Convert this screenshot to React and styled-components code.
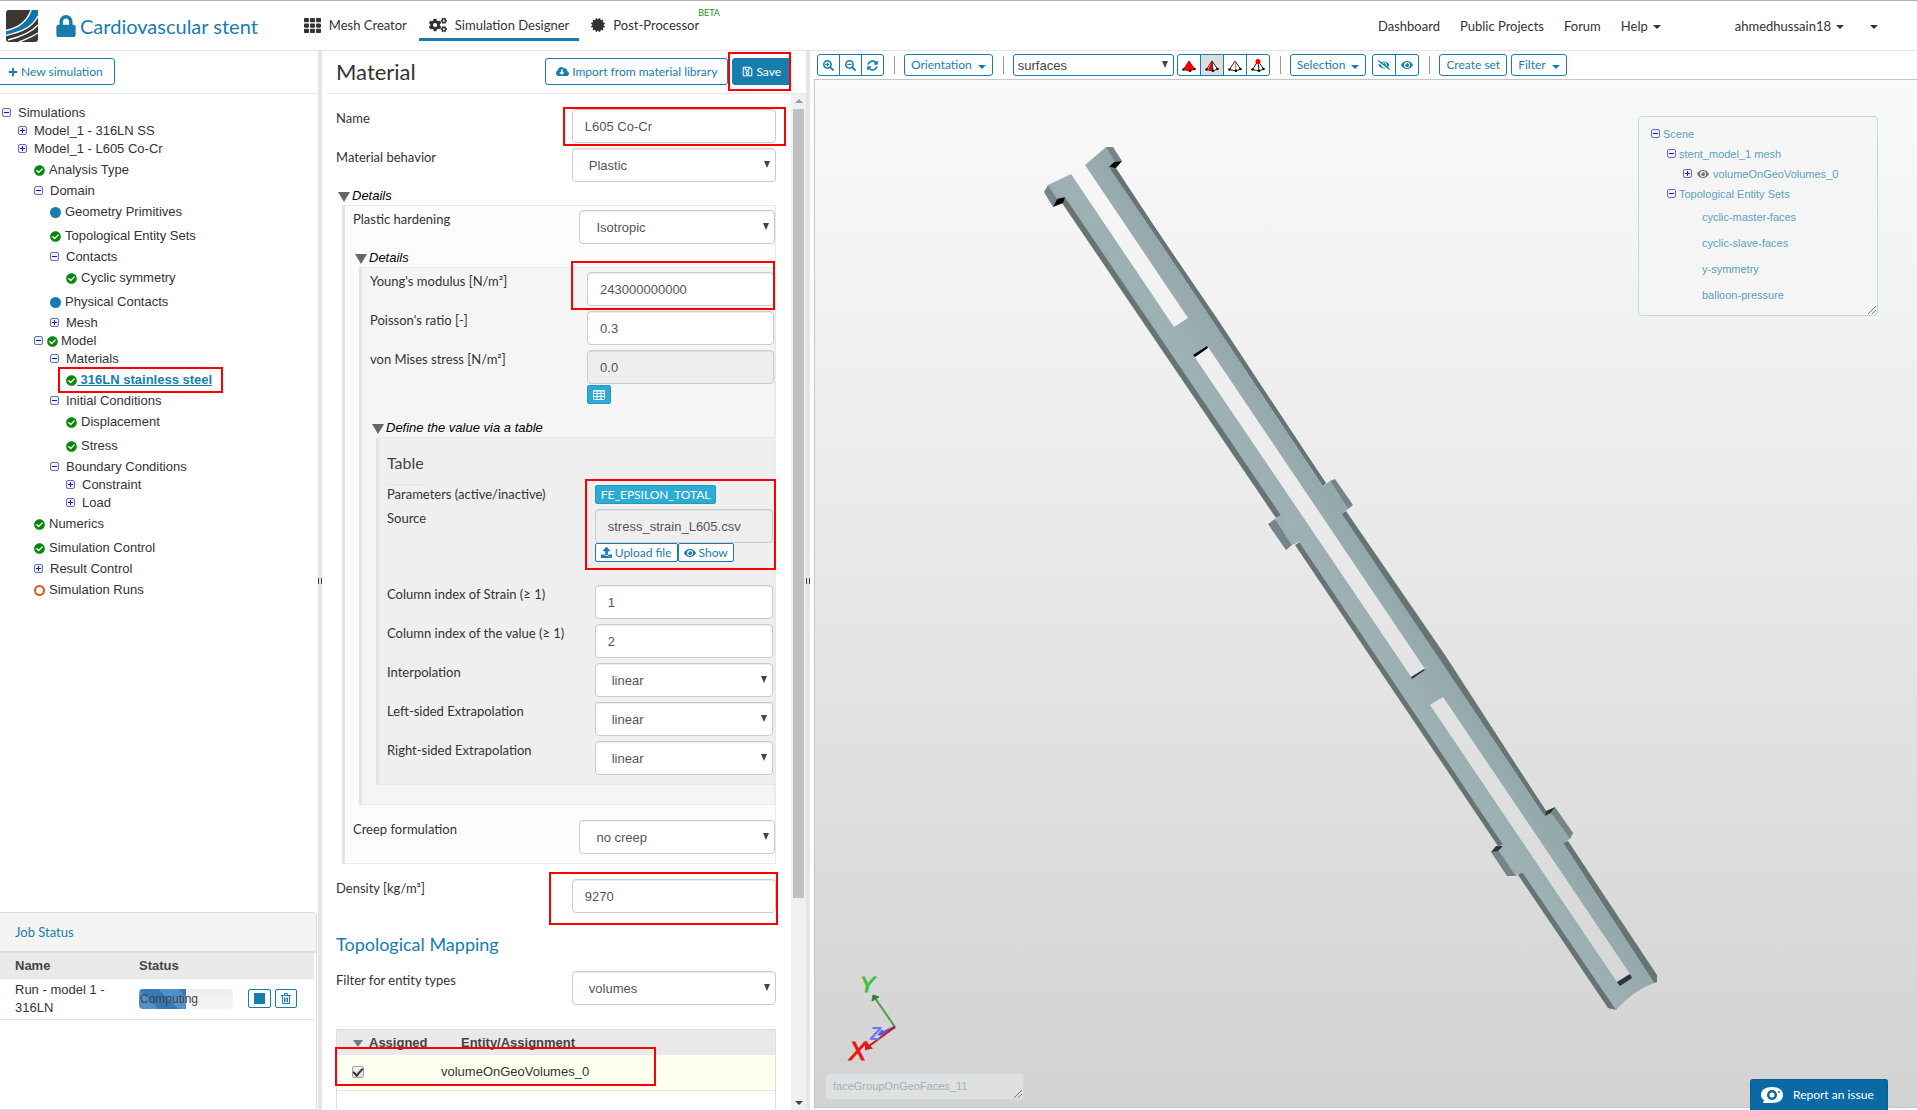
import { useState } from "react";
import styled, { createGlobalStyle, css } from "styled-components";
import {
    FaLock, FaTh, FaCogs, FaCertificate, FaPlus, FaCloudDownloadAlt, FaRegSave, FaUpload,
    FaEye, FaEyeSlash, FaSearchPlus, FaSearchMinus, FaSyncAlt, FaCheckCircle,
} from "react-icons/fa";

const blue = "#177dad";
const sans = `"Liberation Sans", Arial, sans-serif`;
const lato = `Lato, "Liberation Sans", sans-serif`;

const GlobalStyle = createGlobalStyle`
    * { box-sizing: border-box; }
    body {
        margin: 0;
        background: #fff;
        color: #333;
        font: 13px/18px ${sans};
    }
    button, input, select { font: inherit; margin: 0; }
    a { color: inherit; text-decoration: none; }
`;

const Page = styled.div`
    display: flex;
    flex-direction: column;
    height: 100vh;
    overflow: hidden;
`;

/* red frame laid over a part of the page */
const Mark = styled.span`
    position: absolute;
    z-index: 3;
    inset: ${(p) => p.$inset};
    border: 2px solid #f00;
    pointer-events: none;
`;

/* ---------- header ---------- */

const Header = styled.header`
    display: flex;
    align-items: center;
    height: 51px;
    flex: none;
    padding: 0 39px 0 6px;
    border-top: 1px solid #b0b0b0;
    border-bottom: 1px solid #e5e5e5;
    font: 13px/18px ${lato};
`;
const ProjectName = styled.h1`
    display: flex;
    align-items: center;
    gap: 3px;
    margin: 0 36px 0 17px;
    font: 20px/26px ${lato};
    color: ${blue};
`;
const Tabs = styled.nav`
    display: flex;
    flex: 1;
    gap: 2px;
`;
const Tab = styled.a`
    position: relative;
    display: flex;
    align-items: center;
    gap: 8px;
    height: 29px;
    padding: 0 10px;
    margin-top: 2px;
    border-bottom: 3px solid ${(p) => (p.$active ? blue : "transparent")};
`;
const Beta = styled.sup`
    position: absolute;
    left: 100%;
    top: -5px;
    margin-left: -11px;
    font-size: 9px;
    line-height: 12px;
    color: #1d8f1d;
`;
const Links = styled.nav`
    display: flex;
    gap: 20px;
    margin-right: 74px;
`;
const Account = styled.div`
    display: flex;
    gap: 26px;
`;
const MenuLink = styled.a`
    display: flex;
    align-items: center;
    gap: 5px;
`;
const Caret = styled.span`
    border: 4px solid transparent;
    border-top-color: currentColor;
    border-bottom: 0;
    margin-top: 3px;
`;

/* ---------- panes ---------- */

const Main = styled.main`
    display: flex;
    flex: 1;
    min-height: 0;
`;
const Side = styled.aside`
    display: flex;
    flex-direction: column;
    width: 318px;
    flex: none;
`;
const Center = styled.section`
    display: flex;
    flex-direction: column;
    width: 484px;
    flex: none;
    padding-left: 4px;
`;
const Splitter = styled.div`
    display: flex;
    align-items: center;
    justify-content: center;
    width: 4px;
    flex: none;
    background: #e5e5e5;

    &::after {
        content: "";
        width: 3px;
        height: 6px;
        border: solid #444;
        border-width: 0 1px;
    }
`;
const PaneHead = styled.div`
    display: flex;
    align-items: center;
    gap: 4px;
    height: 43px;
    flex: none;
    border-bottom: 1px solid #e8e8e8;
    padding: ${(p) => p.$pad || 0};
`;
const PaneTitle = styled.h2`
    flex: 1;
    margin: 0;
    font: 22px/26px ${lato};
`;
const Button = styled.button`
    display: inline-flex;
    align-items: center;
    justify-content: center;
    gap: 3px;
    height: 27px;
    padding: 0 10px;
    border: 1px solid ${blue};
    border-radius: 3px;
    background: #fff;
    color: ${blue};
    font: 12px/18px ${lato};
    white-space: nowrap;
    ${(p) => p.$primary && css`
        background: ${blue};
        color: #fff;
        padding: 0 9px;
    `}
    ${(p) => p.$small && css`
        height: 19px;
        padding: 0 5px;
        border-radius: 2px;
    `}
    ${(p) => p.$edge && css`
        margin-left: -1px;
        border-radius: 0 3px 3px 0;
        padding: 0 11px 0 8px;
    `}
`;
const Anchor = styled.span`
    position: relative;
    display: flex;
`;

/* ---------- simulation tree ---------- */

const Tree = styled.ul`
    flex: 1;
    margin: 0;
    padding: 10px 0 0;
    list-style: none;
`;
const Node = styled.li`
    display: flex;
    align-items: center;
    gap: ${(p) => (p.$tight ? 3 : 4)}px;
    height: ${(p) => (p.$leaf ? 24 : 18)}px;
    padding-left: ${(p) => 2 + p.$level * 16}px;
`;
const NodeLink = styled.a`
    margin-left: ${(p) => (p.$folder ? 2 : 0)}px;
    ${(p) => p.$active && css`
        margin-left: -4px;
        white-space: pre;
        font-weight: bold;
        text-decoration: underline;
        color: ${blue};
    `}
`;
const Dot = styled.span`
    width: 11px;
    height: 11px;
    border-radius: 50%;
    background: ${(p) => (p.$open ? "#fff" : blue)};
    border: ${(p) => (p.$open ? "2px solid #e0561f" : 0)};
`;

/* ---------- jobs ---------- */

const Jobs = styled.section`
    height: 198px;
    flex: none;
    margin-right: 1px;
    border: 1px solid #ddd;
    border-left: 0;
    border-radius: 0 4px 0 0;
`;
const JobsTitle = styled.h3`
    margin: 0;
    padding: 10px 15px;
    border-bottom: 2px solid #ddd;
    background: #f4f4f4;
    font: 13px/18px ${lato};
    color: ${blue};
`;
const JobTable = styled.table`
    width: calc(100% - 2px);
    border-collapse: collapse;
    table-layout: fixed;

    th {
        height: 26px;
        padding: 0 0 0 15px;
        background: #e9e9e9;
        text-align: left;
        color: #444;
    }
    td {
        height: 40px;
        padding: 1px 0 1px 15px;
        border-bottom: 1px solid #ddd;
    }
    td + td, th + th { padding-left: 0; }
`;
const Progress = styled.div`
    width: 94px;
    height: 20px;
    border-radius: 4px;
    background: linear-gradient(#eee, #f5f5f5);
    overflow: hidden;
`;
const ProgressBar = styled.div`
    height: 20px;
    padding-left: 1px;
    background: repeating-linear-gradient(45deg, #5290c8 0 14px, #337ab7 14px 28px);
    font-size: 12px;
    line-height: 20px;
    color: #444;
    white-space: nowrap;
`;
const JobActions = styled.div`
    display: flex;
    gap: 4px;
`;
const StopSquare = styled.span`
    width: 11px;
    height: 11px;
    background: ${blue};
`;

/* ---------- material form ---------- */

const Scroller = styled.div`
    display: flex;
    flex: 1;
    min-height: 0;
`;
const Form = styled.form`
    flex: 1;
    padding: 15px 15px 0 10px;
    overflow: hidden;
`;
const ScrollTrack = styled.div`
    display: flex;
    flex-direction: column;
    align-items: center;
    width: 15px;
    padding: 5px 0;
    background: #f0f0f0;
`;
const ScrollArrow = styled.span`
    border: 4px solid transparent;
    border-width: ${(p) => (p.$down ? "4px 4px 0" : "0 4px 4px")};
    border-top-color: ${(p) => (p.$down ? "#444" : "transparent")};
    border-bottom-color: ${(p) => (p.$down ? "transparent" : "#999")};
`;
const ScrollSpace = styled.div`
    flex: 1;
    width: 11px;
    padding: 6px 0;
`;
const ScrollThumb = styled.div`
    height: 80%;
    background: #c1c1c1;
`;
const Row = styled.div`
    position: relative;
    display: grid;
    grid-template-columns: 1fr calc(48% - 7px);
    margin: ${(p) => p.$top || 0}px 0 5px;
`;
const Label = styled.label`
    font: 13px/18px ${lato};
`;
const fieldBox = css`
    display: block;
    width: 100%;
    height: 34px;
    border: 1px solid #ccc;
    border-radius: 4px;
    background: #fff;
    box-shadow: inset 0 1px 1px rgba(0, 0, 0, 0.075);
    color: #555;
`;
const Input = styled.input`
    ${fieldBox}
    padding: 0 12px;

    &:disabled { background: #eee; }
`;
const SelectWrap = styled.span`
    position: relative;
    display: block;

    &::after {
        content: "";
        position: absolute;
        right: 6px;
        top: 50%;
        margin-top: -4px;
        border: 3px solid transparent;
        border-top: 7px solid #444;
        border-bottom: 0;
        pointer-events: none;
    }
`;
const Select = styled.select`
    ${fieldBox}
    appearance: none;
    padding: 2px 16px 0;
`;
const Disclosure = styled.button`
    display: flex;
    align-items: center;
    gap: 2px;
    height: 18px;
    margin: ${(p) => p.$top || 0}px 0 0;
    padding: 0 0 0 2px;
    border: 0;
    background: none;
    font-style: italic;
    color: #000;

    &::before {
        content: "";
        border: 6px solid transparent;
        border-top: 10px solid #666;
        border-bottom: 0;
        margin-top: 2px;
    }
`;
const Group = styled.div`
    margin-left: 6px;
    padding: 4px 0 ${(p) => p.$bottom}px 8px;
    border: 1px solid #eaeaea;
    border-left: 3px solid #e3e3e3;
    background: ${(p) => p.$bg};
`;
const TableTitle = styled.h4`
    display: table;
    margin: 0;
    padding: 11px 0 11px;
    border-bottom: 1px solid #e5e5e5;
    font: 16px/20px ${lato};
    color: #444;
`;
const InfoButton = styled.button`
    display: flex;
    align-items: center;
    justify-content: center;
    min-width: 22px;
    height: 19px;
    margin-top: ${(p) => p.$top || 0}px;
    padding: 0 5px;
    border: 1px solid #269abc;
    border-radius: 2px;
    background: #2dabd2;
    color: #fff;
    font: 12px/16px ${lato};
`;
const ButtonPair = styled.div`
    display: flex;
`;
const SectionTitle = styled.h3`
    margin: 20px 0 16px;
    font: 18px/22px ${lato};
    color: ${blue};
`;
const MappingBox = styled.div`
    position: relative;
    height: 120px;
    margin-top: 24px;
    border: 1px solid #ddd;
`;
const MappingTable = styled.table`
    width: 100%;
    border-collapse: collapse;

    th {
        height: 25px;
        padding: 0 0 0 16px;
        background: #e9e9e9;
        text-align: left;
        color: #444;
    }
    th + th { padding-left: 20px; }
    td {
        height: 35px;
        padding: 0 0 0 15px;
        background: #fffff0;
        border-bottom: 1px solid #e8e8e0;
    }
    td + td { padding-left: 0; }
`;
const Checkbox = styled.input`
    appearance: none;
    display: grid;
    place-items: center;
    width: 12px;
    height: 12px;
    border: 1px solid #a5a5a5;
    border-radius: 2px;
    background: linear-gradient(#f2f2f2, #dcdcdc);

    &:checked::after {
        content: "";
        width: 4px;
        height: 8px;
        margin-top: -3px;
        border: solid #333;
        border-width: 0 2px 2px 0;
        transform: rotate(42deg);
    }
`;
const Sorted = styled.span`
    display: inline-block;
    margin-right: 6px;
    border: 5px solid transparent;
    border-top: 7px solid #6d7885;
    border-bottom: 0;
`;

/* ---------- viewer ---------- */

const Viewer = styled.section`
    display: flex;
    flex-direction: column;
    flex: 1;
    min-width: 0;
    padding: 0 0 2px 4px;
`;
const Toolbar = styled.div`
    display: flex;
    align-items: center;
    height: 28px;
    flex: none;
    padding: 0 3px;
`;
const ToolGroup = styled.div`
    display: flex;
    margin-right: ${(p) => p.$gap || 0}px;
`;
const Tool = styled.button`
    display: flex;
    align-items: center;
    justify-content: center;
    gap: 6px;
    height: 22px;
    min-width: ${(p) => (p.$narrow ? 23 : 24)}px;
    margin-right: -1px;
    padding: 0 ${(p) => (p.$text ? 6 : 0)}px;
    border: 1px solid ${blue};
    background: ${(p) => (p.$pressed ? "#ddd" : "#fff")};
    color: ${blue};
    font: 12px/18px ${lato};
    white-space: nowrap;

    &:first-child { border-radius: 3px 0 0 3px; }
    &:last-child { border-radius: 0 3px 3px 0; margin-right: 0; }
    &:only-child { border-radius: 3px; }
`;
const Divider = styled.span`
    width: 1px;
    height: 18px;
    margin: 0 9px 0 10px;
    background: #999;
`;
const PickSelect = styled.select`
    appearance: none;
    display: block;
    width: 161px;
    height: 22px;
    padding: 2px 4px 0;
    border: 1px solid ${blue};
    border-radius: 3px;
    background: #fff;
    color: #444;
`;
const Canvas = styled.div`
    position: relative;
    flex: 1;
    min-height: 0;
    border: 1px solid #c6c6c6;
    border-right: 0;
    background: linear-gradient(#fafafa, #ebebeb 40%, #d2d2d2);
    overflow: hidden;
`;
const Drawing = styled.svg`
    display: block;
    width: 100%;
    height: 100%;
`;
const ScenePanel = styled.div`
    position: absolute;
    top: 36px;
    right: 39px;
    width: 240px;
    height: 200px;
    padding: 7px 12px;
    border: 1px solid #b5dfe8;
    border-radius: 4px;
    background: rgba(245, 245, 245, 0.8);
    font-size: 11px;
    color: #5d9fc0;
`;
const SceneNode = styled.div`
    display: flex;
    align-items: center;
    gap: ${(p) => p.$gap || 2}px;
    height: ${(p) => (p.$tall ? 26 : 20)}px;
    padding-left: ${(p) => p.$indent}px;
`;
const HoverBox = styled.div`
    position: absolute;
    left: 10px;
    bottom: 7px;
    width: 199px;
    height: 27px;
    padding: 0 7px;
    border: 1px solid #c8dce2;
    border-radius: 4px;
    background: #e0e0e0;
    font-size: 11px;
    line-height: 25px;
    color: #9ab2c0;
`;
const Grip = styled.svg`
    position: absolute;
    right: 1px;
    bottom: 1px;
`;
const Report = styled.button`
    position: fixed;
    right: 29px;
    bottom: 0;
    display: flex;
    align-items: center;
    gap: 9px;
    width: 138px;
    height: 31px;
    padding: 0 9px;
    border: 1px solid #0a5c93;
    border-bottom: 0;
    border-radius: 3px 3px 0 0;
    background: #0b69a3;
    color: #fff;
    font: 12px/18px ${lato};
    white-space: nowrap;
`;

function Logo() {
    return (
        <svg width="32" height="32" viewBox="0 0 32 32">
            <rect width="32" height="32" rx="3" fill="#3b3735" />
            <path d="M25 0H32V8C26 18 14 21 0 25V20C12 17 21 12 25 0Z" fill="#0d76b0" />
            <path d="M25 0C21 12 12 18 0 20.500M32 6C26 18 15 22 0 25.500M32 15C25 23 14 27 2 30M32 23C26 27 20 29 13 32" fill="none" stroke="#fff" strokeWidth="1.400" />
        </svg>
    );
}

function Expander({ open }) {
    return (
        <svg width="10" height="10" viewBox="0 0 10 10">
            <rect x=".5" y=".5" width="8" height="8" rx="1.500" fill="#eef0fa" stroke="#6570ba" />
            <path d={open ? "M2 4.500H7" : "M2 4.500H7M4.500 2V7"} stroke="#1a1ab0" />
        </svg>
    );
}

function GridIcon() {
    return (
        <svg width="12" height="10" viewBox="0 0 12 10" fill="none" stroke="currentColor">
            <rect x=".5" y=".5" width="11" height="9" rx="1" />
            <path d="M0 1H12M0 3.500H12M0 6.500H12M4 1V10M8 1V10" />
        </svg>
    );
}

function TrashIcon() {
    return (
        <svg width="10" height="11" viewBox="0 0 10 11" fill="none" stroke="currentColor">
            <path d="M0 2.500H10M3.500 2V.5H6.500V2M1.500 2.500V10.500H8.500V2.500M3.500 4.500V9M5 4.500V9M6.500 4.500V9" />
        </svg>
    );
}

function ReportIcon() {
    return (
        <svg width="24" height="18" viewBox="0 0 24 18">
            <path d="M12 1C19 1 23 4 23 9S19 17 12 17H3L4 14C2 13 1 11 1 9C1 4 5 1 12 1Z" fill="#fff" />
            <circle cx="12" cy="9" r="5" fill="#0b69a3" />
            <circle cx="12" cy="9" r="2.500" fill="#fff" />
            <circle cx="19" cy="6" r="1" fill="#0b69a3" />
        </svg>
    );
}

function ResizeGrip() {
    return (
        <Grip width="8" height="8" viewBox="0 0 8 8">
            <path d="M0 8L8 0M4 8L8 4" stroke="#777" />
        </Grip>
    );
}

function Tetra({ kind }) {
    return (
        <svg width="14" height="13" viewBox="0 0 14 13" strokeLinejoin="round">
            <path d="M7 2L1.500 10.500L8 12L12.500 10Z" fill={kind === "volume" ? "#f00" : "#fff"} stroke={kind === "volume" ? "#c00" : "#222"} />
            {kind === "face" && <path d="M7 2L3 10.500L8 12Z" fill="#f00" />}
            <path d="M7 2L8 12" stroke={kind === "volume" ? "#c00" : kind === "edge" ? "#e55" : "#222"} />
            {kind === "node" && <circle cx="7" cy="2.500" r="2.500" fill="#f00" />}
            <circle cx="1.500" cy="10.500" r="1.300" fill="#111" />
            <circle cx="8" cy="11.700" r="1.300" fill="#111" />
            <circle cx="12.500" cy="10" r="1.300" fill="#111" />
        </svg>
    );
}

function Stent() {
    return (
        <g>
            <defs>
                <linearGradient id="metal" gradientUnits="userSpaceOnUse" x1="1300" y1="607" x2="1371" y2="560">
                    <stop offset="0" stopColor="#94a8ab" />
                    <stop offset=".45" stopColor="#9eb2b6" />
                    <stop offset="1" stopColor="#95a9ac" />
                </linearGradient>
            </defs>
            {/* long side walls */}
            <g fill="#667574">
                <path d="M1065 197L1280 515L1276 518L1062 203Z" />
                <path d="M1300 542L1503 845L1498 846L1295 545Z" />
                <path d="M1522 872L1617 1010L1608 1008L1518 875Z" />
                <path d="M1109 167L1116 168L1216 320L1326 483L1323 486Z" />
                <path d="M1341 514L1346 511L1445 655L1546 811L1545 817Z" />
                <path d="M1563 843L1568 841L1657 975V982L1654 983Z" />
            </g>
            <path fill="url(#metal)" fillRule="evenodd" d="M1085 165L1106 147L1116 161L1110 167L1323 486L1330 481L1348 509L1342 514L1545 816L1551 813L1570 839L1563 843L1654 983Q1634 990 1616 1010L1522 872L1516 876L1498 851L1503 845L1299 542L1292 545L1275 519L1279 515L1065 197L1057 200L1048 185L1071 174L1174 327L1188 318Z
                M1194 356L1208 347L1425 669L1412 678Z M1430 705L1443 697L1630 974L1617 982Z" />
            {/* wall thickness along both outer edges */}
            <g fill="none" stroke="#667574" strokeWidth="4">
                <path d="M1065 201L1279 516M1298 544L1501 845M1521 874L1612 1008" />
                <path d="M1112 168L1217 322L1324 484M1344 513L1443 658L1545 813M1566 842L1655 978" />
            </g>
            {/* tab sides */}
            <g fill="#758486">
                <path d="M1106 147H1113L1122 161L1115 162Z" />
                <path d="M1048 185L1044 192L1053 207L1057 199Z" />
                <path d="M1268 524L1275 519L1292 545L1286 550Z" />
                <path d="M1335 479L1330 481L1348 509L1353 505Z" />
                <path d="M1491 852L1498 850L1516 876H1507Z" />
                <path d="M1555 807L1573 833L1570 839L1551 813Z" />
            </g>
            <path fill="#000" d="M1109 167L1114 162L1122 161L1116 168ZM1053 207L1057 199L1065 197L1063 203ZM1193 355L1207 346L1208 348L1195 357Z" />
            <path fill="#2f3638" d="M1411 677L1424 669L1425 670L1412 679ZM1545 816L1546 811L1555 807L1551 813ZM1491 852L1496 846H1503L1498 851ZM1617 982L1630 974L1632 978L1620 986Z" />
        </g>
    );
}

function Axes() {
    return (
        <g fontFamily="Liberation Sans, sans-serif" fontStyle="italic" fontWeight="bold">
            <path d="M895 1027L875 998" stroke="#4a9e4a" strokeWidth="2" />
            <path d="M872 1001L873 995L879 997Z" fill="#3c7d3c" stroke="#3c7d3c" />
            <path d="M895 1027L880 1034" stroke="#5a5ad0" strokeWidth="3" />
            <path d="M878 1035L882 1030L885 1035Z" fill="#5a5ae0" stroke="#5a5ae0" />
            <path d="M895 1027L869 1046" stroke="#d01818" strokeWidth="2" />
            <path d="M866 1043L871 1048L866 1049Z" fill="#d81818" stroke="#d81818" strokeWidth="2" />
            <text x="860" y="992" fontSize="22" fontWeight="normal" stroke="#3fbf3f" fill="#3fbf3f">Y</text>
            <text x="870" y="1040" fontSize="18" fill="#7474ff">Z</text>
            <text x="849" y="1060" fontSize="26" fontWeight="normal" stroke="#e81818" fill="#e81818">X</text>
        </g>
    );
}

const nodes = [
    { text: "Simulations", level: 0, open: true },
    { text: "Model_1 - 316LN SS", level: 1, open: false },
    { text: "Model_1 - L605 Co-Cr", level: 1, open: false },
    { text: "Analysis Type", level: 2, mark: "ok" },
    { text: "Domain", level: 2, open: true },
    { text: "Geometry Primitives", level: 3, mark: "dot" },
    { text: "Topological Entity Sets", level: 3, mark: "ok" },
    { text: "Contacts", level: 3, open: true },
    { text: "Cyclic symmetry", level: 4, mark: "ok" },
    { text: "Physical Contacts", level: 3, mark: "dot" },
    { text: "Mesh", level: 3, open: false },
    { text: "Model", level: 2, open: true, mark: "ok" },
    { text: "Materials", level: 3, open: true },
    { text: " 316LN stainless steel", level: 4, mark: "ok", active: true },
    { text: "Initial Conditions", level: 3, open: true },
    { text: "Displacement", level: 4, mark: "ok" },
    { text: "Stress", level: 4, mark: "ok" },
    { text: "Boundary Conditions", level: 3, open: true },
    { text: "Constraint", level: 4, open: false },
    { text: "Load", level: 4, open: false },
    { text: "Numerics", level: 2, mark: "ok" },
    { text: "Simulation Control", level: 2, mark: "ok" },
    { text: "Result Control", level: 2, open: false },
    { text: "Simulation Runs", level: 2, mark: "open" },
];

function TreeNode({ node }) {
    const folder = node.open !== undefined;
    return (
        <Node $leaf={!folder} $tight={folder && node.mark} $level={node.level}>
            {folder && <Expander open={node.open} />}
            {node.mark === "ok" && <FaCheckCircle size={11} color="#0a870a" />}
            {node.mark === "dot" && <Dot />}
            {node.mark === "open" && <Dot $open />}
            <Anchor>
                <NodeLink href="#" $active={node.active} $folder={folder && !node.mark}>{node.text}</NodeLink>
                {node.active && <Mark $inset="-4px -11px -4px -23px" />}
            </Anchor>
        </Node>
    );
}

function TextField({ id, label, value, mark, top, disabled, children }) {
    return (
        <Row $top={top}>
            <Label htmlFor={id}>{label}</Label>
            <div>
                <Input id={id} defaultValue={value} disabled={disabled} />
                {children}
            </div>
            {mark && <Mark $inset={mark} />}
        </Row>
    );
}

function SelectField({ id, label, value, top }) {
    return (
        <Row $top={top}>
            <Label htmlFor={id}>{label}</Label>
            <SelectWrap>
                <Select id={id} defaultValue={value}>
                    <option>{value}</option>
                </Select>
            </SelectWrap>
        </Row>
    );
}

function MaterialForm() {
    const [assigned, setAssigned] = useState(true);
    return (
        <Form onSubmit={(event) => event.preventDefault()}>
            <TextField id="name" label="Name" value="L605 Co-Cr" mark="-2px -10px -3px 227px" />
            <SelectField id="behavior" label="Material behavior" value="Plastic" />
            <Disclosure type="button">Details</Disclosure>
            <Group $bg="#fcfcfc" $bottom={4}>
                <SelectField id="hardening" label="Plastic hardening" value="Isotropic" />
                <Disclosure type="button">Details</Disclosure>
                <Group $bg="#f5f5f5" $bottom={19}>
                    <TextField id="young" label="Young's modulus [N/m²]" value="243000000000" mark="-11px -1px -4px 201px" />
                    <TextField id="poisson" label="Poisson's ratio [-]" value="0.3" />
                    <TextField id="mises" label="von Mises stress [N/m²]" value="0.0" disabled>
                        <InfoButton type="button" $top={1} aria-label="Table"><GridIcon /></InfoButton>
                    </TextField>
                    <Disclosure type="button" $top={15}>Define the value via a table</Disclosure>
                    <Group $bg="#efefef" $bottom={4}>
                        <TableTitle>Table</TableTitle>
                        <Row>
                            <Label as="span">Parameters (active/inactive)</Label>
                            <div><InfoButton type="button">FE_EPSILON_TOTAL</InfoButton></div>
                            <Mark $inset="-6px -3px -66px 198px" />
                        </Row>
                        <TextField id="source" label="Source" value="stress_strain_L605.csv" disabled>
                            <ButtonPair>
                                <Button type="button" $small><FaUpload size={11} /> Upload file</Button>
                                <Button type="button" $small><FaEye size={12} /> Show</Button>
                            </ButtonPair>
                        </TextField>
                        <TextField id="strain" label="Column index of Strain (≥ 1)" value="1" top={23} />
                        <TextField id="column" label="Column index of the value (≥ 1)" value="2" />
                        <SelectField id="interpolation" label="Interpolation" value="linear" />
                        <SelectField id="left" label="Left-sided Extrapolation" value="linear" />
                        <SelectField id="right" label="Right-sided Extrapolation" value="linear" />
                    </Group>
                </Group>
                <SelectField id="creep" label="Creep formulation" value="no creep" top={15} />
            </Group>
            <TextField id="density" label="Density [kg/m³]" value="9270" top={15} mark="-7px -2px -12px 213px" />
            <SectionTitle>Topological Mapping</SectionTitle>
            <SelectField id="filter" label="Filter for entity types" value="volumes" />
            <MappingBox>
                <MappingTable>
                    <thead>
                        <tr>
                            <th style={{ width: 104 }}><Sorted />Assigned</th>
                            <th>Entity/Assignment</th>
                        </tr>
                    </thead>
                    <tbody>
                        <tr>
                            <td>
                                <Checkbox
                                    type="checkbox"
                                    aria-label="volumeOnGeoVolumes_0"
                                    checked={assigned}
                                    onChange={(event) => setAssigned(event.target.checked)}
                                />
                            </td>
                            <td>volumeOnGeoVolumes_0</td>
                        </tr>
                    </tbody>
                </MappingTable>
                <Mark $inset="17px 119px 62px -2px" />
            </MappingBox>
        </Form>
    );
}

function JobStatus() {
    return (
        <Jobs>
            <JobsTitle>Job Status</JobsTitle>
            <JobTable>
                <thead>
                    <tr>
                        <th style={{ width: 139 }}>Name</th>
                        <th style={{ width: 109 }}>Status</th>
                        <th aria-label="Actions"></th>
                    </tr>
                </thead>
                <tbody>
                    <tr>
                        <td>Run - model 1 -<br />316LN</td>
                        <td>
                            <Progress><ProgressBar style={{ width: "50%" }}>Computing</ProgressBar></Progress>
                        </td>
                        <td>
                            <JobActions>
                                <Button $small aria-label="Stop"><StopSquare /></Button>
                                <Button $small aria-label="Delete"><TrashIcon /></Button>
                            </JobActions>
                        </td>
                    </tr>
                </tbody>
            </JobTable>
        </Jobs>
    );
}

function ViewerToolbar() {
    return (
        <Toolbar>
            <ToolGroup>
                <Tool $narrow aria-label="Zoom in"><FaSearchPlus size={11} /></Tool>
                <Tool $narrow aria-label="Zoom out"><FaSearchMinus size={11} /></Tool>
                <Tool $narrow aria-label="Reset"><FaSyncAlt size={11} /></Tool>
            </ToolGroup>
            <Divider />
            <ToolGroup><Tool $text>Orientation <Caret /></Tool></ToolGroup>
            <Divider />
            <ToolGroup $gap={3}>
                <SelectWrap>
                    <PickSelect aria-label="Pick mode" defaultValue="surfaces"><option>surfaces</option></PickSelect>
                </SelectWrap>
            </ToolGroup>
            <ToolGroup>
                <Tool aria-label="Volumes"><Tetra kind="volume" /></Tool>
                <Tool aria-label="Faces" $pressed><Tetra kind="face" /></Tool>
                <Tool aria-label="Edges"><Tetra kind="edge" /></Tool>
                <Tool aria-label="Nodes"><Tetra kind="node" /></Tool>
            </ToolGroup>
            <Divider />
            <ToolGroup $gap={6}><Tool $text>Selection <Caret /></Tool></ToolGroup>
            <ToolGroup>
                <Tool aria-label="Hide"><FaEyeSlash size={12} /></Tool>
                <Tool aria-label="Show"><FaEye size={12} /></Tool>
            </ToolGroup>
            <Divider />
            <ToolGroup $gap={4}><Tool $text>Create set</Tool></ToolGroup>
            <ToolGroup><Tool $text>Filter <Caret /></Tool></ToolGroup>
        </Toolbar>
    );
}

export default function App() {
    return (
        <Page>
            <GlobalStyle />
            <Header>
                <Logo />
                <ProjectName><FaLock size={22} /> Cardiovascular stent</ProjectName>
                <Tabs>
                    <Tab href="#"><FaTh size={17} /> Mesh Creator</Tab>
                    <Tab href="#" $active><FaCogs size={18} /> Simulation Designer</Tab>
                    <Tab href="#"><FaCertificate size={14} /> Post-Processor<Beta>BETA</Beta></Tab>
                </Tabs>
                <Links>
                    <MenuLink href="#">Dashboard</MenuLink>
                    <MenuLink href="#">Public Projects</MenuLink>
                    <MenuLink href="#">Forum</MenuLink>
                    <MenuLink href="#">Help <Caret /></MenuLink>
                </Links>
                <Account>
                    <MenuLink href="#">ahmedhussain18 <Caret /></MenuLink>
                    <MenuLink href="#" aria-label="More"><Caret /></MenuLink>
                </Account>
            </Header>
            <Main>
                <Side>
                    <PaneHead $pad="0 0 1px">
                        <Button $edge><FaPlus size={10} /> New simulation</Button>
                    </PaneHead>
                    <Tree>
                        {nodes.map((node) => <TreeNode key={node.text} node={node} />)}
                    </Tree>
                    <JobStatus />
                </Side>
                <Splitter />
                <Center>
                    <PaneHead $pad="0 15px 1px 10px">
                        <PaneTitle>Material</PaneTitle>
                        <Button><FaCloudDownloadAlt size={13} /> Import from material library</Button>
                        <Anchor>
                            <Button $primary><FaRegSave size={11} /> Save</Button>
                            <Mark $inset="-6px 0 -6px -4px" />
                        </Anchor>
                    </PaneHead>
                    <Scroller>
                        <MaterialForm />
                        <ScrollTrack>
                            <ScrollArrow />
                            <ScrollSpace><ScrollThumb /></ScrollSpace>
                            <ScrollArrow $down />
                        </ScrollTrack>
                    </Scroller>
                </Center>
                <Splitter />
                <Viewer>
                    <ViewerToolbar />
                    <Canvas>
                        <Drawing viewBox="815 80 1102 1027" preserveAspectRatio="xMinYMin meet">
                            <Stent />
                            <Axes />
                        </Drawing>
                        <ScenePanel>
                            <SceneNode $indent={0}><Expander open /> Scene</SceneNode>
                            <SceneNode $indent={16}><Expander open /> stent_model_1 mesh</SceneNode>
                            <SceneNode $indent={32} $gap={4}><Expander /> <FaEye size={12} color="#777" /> volumeOnGeoVolumes_0</SceneNode>
                            <SceneNode $indent={16}><Expander open /> Topological Entity Sets</SceneNode>
                            <SceneNode $tall $indent={51}>cyclic-master-faces</SceneNode>
                            <SceneNode $tall $indent={51}>cyclic-slave-faces</SceneNode>
                            <SceneNode $tall $indent={51}>y-symmetry</SceneNode>
                            <SceneNode $tall $indent={51}>balloon-pressure</SceneNode>
                            <ResizeGrip />
                        </ScenePanel>
                        <HoverBox>faceGroupOnGeoFaces_11<ResizeGrip /></HoverBox>
                    </Canvas>
                </Viewer>
            </Main>
            <Report><ReportIcon /> Report an issue</Report>
        </Page>
    );
}
